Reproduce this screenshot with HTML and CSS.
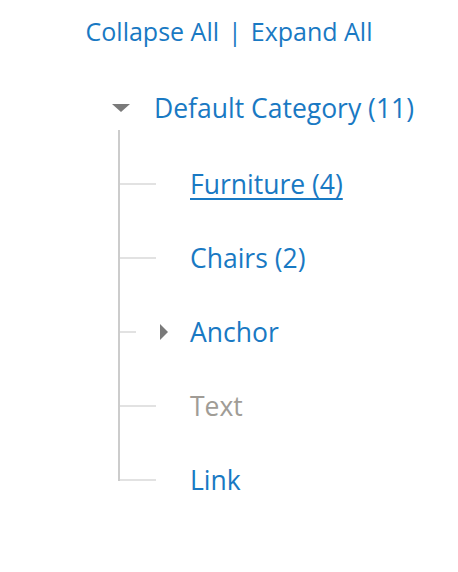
FILE: index.html
```html
<!DOCTYPE html>
<html>
<head>
<meta charset="utf-8">
<link rel="stylesheet" href="styles.css">
</head>
<body>
<div class="page">
  <div class="actions">
    <a class="action" href="#">Collapse All</a><span class="sep">|</span><a class="action" href="#">Expand All</a>
  </div>
  <div class="tree">
    <div class="root-row">
      <span class="tri-down"></span>
      <a class="node root-link" href="#">Default Category (11)</a>
    </div>
    <ul class="children">
      <li class="item"><span class="conn"></span><span class="icon"></span><a class="node hover" href="#">Furniture (4)</a></li>
      <li class="item"><span class="conn"></span><span class="icon"></span><a class="node" href="#">Chairs (2)</a></li>
      <li class="item"><span class="conn short"></span><span class="icon"><span class="tri-right"></span></span><a class="node" href="#">Anchor</a></li>
      <li class="item"><span class="conn"></span><span class="icon"></span><span class="node plain">Text</span></li>
      <li class="item last"><span class="conn"></span><span class="icon"></span><a class="node" href="#">Link</a></li>
    </ul>
  </div>
</div>
</body>
</html>
```

FILE: styles.css
```css
html, body {
  margin: 0;
  padding: 0;
  background: #ffffff;
}
body {
  font-family: "Open Sans", "DejaVu Sans", sans-serif;
}
.page {
  width: 458px;
  height: 572px;
}
.actions {
  display: flex;
  justify-content: center;
  align-items: center;
  gap: 9px;
  padding-top: 14px;
  font-size: 25px;
  line-height: 34px;
  color: #1979c3;
}
.action {
  color: #1979c3;
  text-decoration: none;
}
.sep {
  color: #1979c3;
}
.tree {
  margin-top: 42px;
  padding-left: 112px;
}
.root-row {
  display: flex;
  align-items: center;
  height: 36px;
}
.tri-down {
  width: 0;
  height: 0;
  border-left: 9px solid transparent;
  border-right: 9px solid transparent;
  border-top: 8px solid #7a7a7a;
  margin-right: 24px;
}
.node {
  font-size: 26.5px;
  line-height: 36px;
  color: #1979c3;
  text-decoration: none;
  white-space: nowrap;
}
.node.hover {
  text-decoration: underline;
  text-decoration-thickness: 2px;
  text-underline-offset: 4px;
}
.node.plain {
  color: #a09c96;
}
.children {
  list-style: none;
  margin: 4px 0 0 6px;
  padding: 17px 0 0 0;
  background: linear-gradient(#cccccc, #cccccc) left top / 2px 17px no-repeat;
}
.item {
  display: flex;
  align-items: center;
  height: 74px;
}
.conn {
  width: 38px;
  align-self: stretch;
  background:
    linear-gradient(#cccccc, #cccccc) left top / 2px 100% no-repeat,
    linear-gradient(#e2e2e2, #e2e2e2) left center / 100% 2px no-repeat;
}
.conn.short {
  background:
    linear-gradient(#cccccc, #cccccc) left top / 2px 100% no-repeat,
    linear-gradient(#e2e2e2, #e2e2e2) left center / 18px 2px no-repeat;
}
.item.last .conn {
  background:
    linear-gradient(#cccccc, #cccccc) left top / 2px calc(50% + 1px) no-repeat,
    linear-gradient(#e2e2e2, #e2e2e2) left center / 100% 2px no-repeat;
}
.icon {
  width: 34px;
  display: flex;
  align-items: center;
  padding-left: 4px;
  box-sizing: border-box;
}
.tri-right {
  width: 0;
  height: 0;
  border-top: 8px solid transparent;
  border-bottom: 8px solid transparent;
  border-left: 8px solid #7a7a7a;
}
```
